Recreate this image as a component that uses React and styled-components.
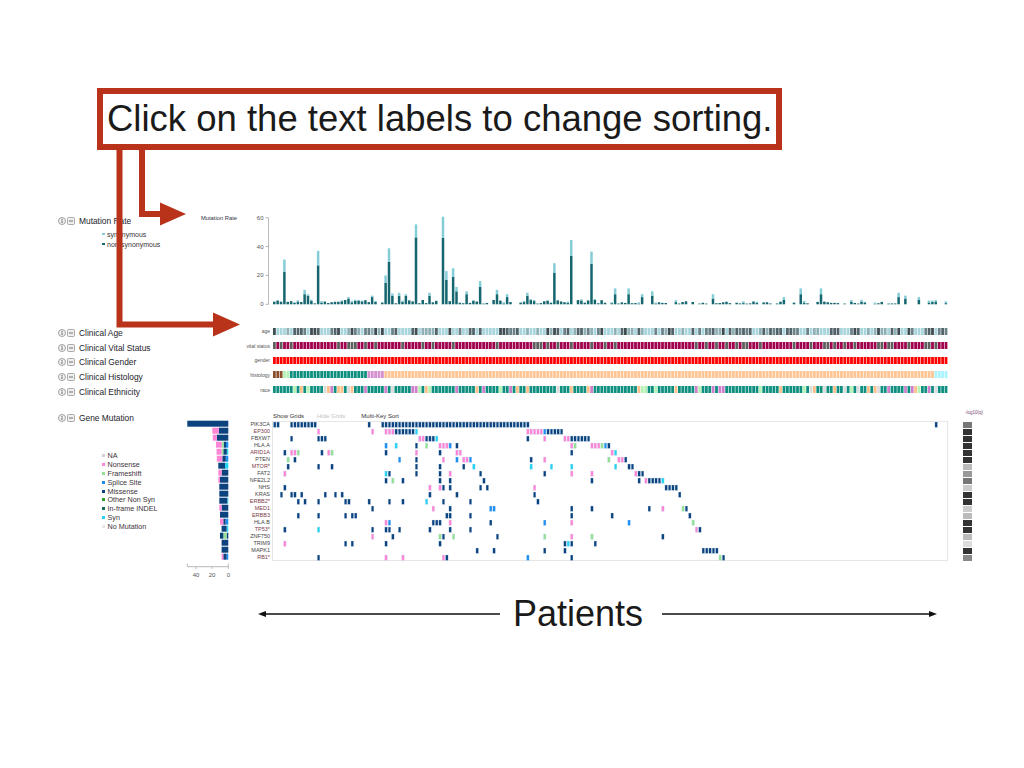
import React from 'react';
import styled, { createGlobalStyle } from 'styled-components';

const RED = '#b9321a';
const N = 200;
const PITCH = 3.375;
const PLOT_W = 676;

const MUT = {
  M: '#0c437f',
  N: '#ff86d6',
  F: '#96e096',
  S: '#1f8ff0',
  Y: '#27d3f2',
};

function mulberry32(a) {
  return function () {
    a |= 0;
    a = (a + 0x6d2b79f5) | 0;
    let t = Math.imul(a ^ (a >>> 15), 1 | a);
    t = (t + Math.imul(t ^ (t >>> 7), 61 | t)) ^ t;
    return ((t ^ (t >>> 14)) >>> 0) / 4294967296;
  };
}

const rng = mulberry32(11);
const pick = (opts) => {
  const r = rng();
  let acc = 0;
  for (const [c, w] of opts) {
    acc += w;
    if (r < acc) return c;
  }
  return opts[opts.length - 1][0];
};

// mutation rate, [non-synonymous, synonymous]
const RATE_PEAKS = {
  3: [22.6, 8.4], 9: [7, 3], 10: [6, 1], 13: [27, 10], 22: [4, 1], 29: [5, 1],
  33: [15, 5], 34: [29.5, 9.3], 35: [6, 1.5], 37: [6, 2], 39: [6, 1], 42: [46.4, 9],
  46: [6, 2], 50: [46, 14.7], 51: [17, 6], 53: [19, 6], 54: [9, 3], 57: [7, 2],
  61: [12, 4], 66: [7, 3], 69: [5, 2], 75: [6, 2], 83: [22, 6.5], 88: [33.5, 11],
  94: [28, 8.5], 101: [7, 4], 105: [7, 4], 109: [5, 2], 112: [6, 3], 130: [4, 3],
  151: [3, 2], 156: [7, 4], 162: [7, 4], 185: [5, 3], 187: [4, 2], 191: [3, 2],
};

const RATES = Array.from({ length: N }, (_, i) => {
  if (RATE_PEAKS[i]) return RATE_PEAKS[i];
  const early = i < 100;
  if (rng() < (early ? 0.08 : 0.25)) return [0, 0];
  const d = early ? 0.5 + rng() * 2.5 : 0.3 + rng() * 1.8;
  const l = rng() < 0.4 ? rng() * 1.4 : 0;
  return [d, l];
});

const AGE = Array.from({ length: N }, () =>
  pick([['#a9d5dd', 0.36], ['#8fb1b6', 0.14], ['#6b8388', 0.15], ['#52636a', 0.2], ['#3f4c51', 0.15]])
);
const VITAL = Array.from({ length: N }, () => pick([['#a0004d', 0.8], ['#5f5f5f', 0.2]]));
const GENDER = Array.from({ length: N }, () => '#ff0000');
const HISTOLOGY = Array.from({ length: N }, (_, i) => {
  if (i < 3) return '#8b4f2c';
  if (i < 5) return '#b6f2b6';
  if (i < 28) return '#0f8f80';
  if (i < 33) return '#d590cf';
  if (i < 196) return '#ffc594';
  return '#aaf3ff';
});
const RACE = Array.from({ length: N }, () =>
  pick([['#0f8f80', 0.75], ['#cf7fcc', 0.08], ['#ffc08a', 0.07], ['#b5f3b5', 0.05], ['#dcdcdc', 0.05]])
);

const CLINICAL = [
  { label: 'Clinical Age', track: 'age', data: AGE },
  { label: 'Clinical Vital Status', track: 'vital status', data: VITAL },
  { label: 'Clinical Gender', track: 'gender', data: GENDER },
  { label: 'Clinical Histology', track: 'histology', data: HISTOLOGY },
  { label: 'Clinical Ethnicity', track: 'race', data: RACE },
];

// name, highlighted, q shade, cells, frequency segments (right to left)
const GENES = [
  ['PIK3CA', 0, '#777', 'M0-1 M5-12 M28 M32-75 M196', 'M41'],
  ['EP300', 1, '#333', 'N13 N29 N33-35 M36-41 Y42 N75-79 S80 M81-85', 'M9.5 N6.5'],
  ['FBXW7', 0, '#333', 'M5 M13-15 N43-44 M45-47 Y48 M75 N80 N86-87 M88-93', 'M11.5 N4'],
  ['HLA.A', 0, '#333', 'S33 Y36 M42 F45 N49-51 S52 M54 N88 F89 N94-96 F97 S98 M99', 'S2.3 M2.3 F2 N5.7'],
  ['ARID1A', 1, '#333', 'M3 N5-6 F7 M14 N16 F17 M33 N42 M49 N54-55 M88 N100 Y101', 'Y1.5 M3.5 F1.7 N5'],
  ['PTEN', 0, '#333', 'F4 M6 S37 M42 N50 S54 N56-57 S58 M76 N80 F99 N102-103 M104', 'S2.5 M3.5 N5.5'],
  ['MTOR*', 1, '#bbb', 'M4 M13 M17 M42 M49 M56 Y59 Y76 Y82 Y88 Y101 M105-106', 'Y3.3 M6.7'],
  ['FAT2', 0, '#999', 'N3 Y33 M34 M42 M49 N52 M61 M80 N88 N94 N107 M108-109', 'M6.7 N3.3'],
  ['NFE2L2', 0, '#777', 'M33 F35 M38 M49 M52 M62 M94 M108 N110 M111-114 Y115', 'M8.3 N1.7'],
  ['NHS', 0, '#ccc', 'M3 N46 N49 M50 M52 M61 M63 N77 M116-119', 'M9'],
  ['KRAS', 0, '#333', 'M2 M5-6 M8 M15 M18 M20 M46 M54 M77 M120', 'M9'],
  ['ERBB2*', 1, '#333', 'M7 M9 M13 M21-22 M28 M34 M38 Y45 M50 M58 M78', 'Y1 M8'],
  ['MED1', 1, '#ccc', 'M29 N47 M52 S64-65 M88 M94 M111 N115 F121 M122', 'M6.7 N2.3'],
  ['ERBB3', 1, '#bbb', 'M7 M13 M21 M23-24 M51-52 M58 M88 M100 M123', 'M8.3'],
  ['HLA.B', 0, '#333', 'N33 S34 M47-49 N52 M64 S80 N88 S105 F124', 'S2.7 M2.3 N3.3'],
  ['TP53*', 1, '#333', 'M3 Y13 M29 M33-34 M37 M46 M52 M58 N125 M126', 'Y1.7 M5'],
  ['ZNF750', 0, '#bbb', 'N29 M35 F49 M50 F53 M66 F80 N88 F94 M115', 'M1.7 F3.3 M3.3'],
  ['TRIM9', 0, '#ddd', 'N3 M21 M23 M33 M49 M86 Y87 M88 M95', 'M6.7'],
  ['MAPK1', 0, '#333', 'M60 M65 M80 M86 M127-131', 'M6.7'],
  ['RB1*', 1, '#888', 'M13 N33 N38 N50 M51 S75 M88 F132 M133', 'S1.7 M3.3 N1.7'],
].map(([name, hi, q, cells, freq]) => ({
  name,
  hi: !!hi,
  q,
  cells: cells.split(' ').flatMap((tok) => {
    const [a, b] = tok.slice(1).split('-').map(Number);
    const out = [];
    for (let i = a; i <= (b ?? a); i++) out.push([i, tok[0]]);
    return out;
  }),
  freq: freq.split(' ').map((tok) => [tok[0], Number(tok.slice(1))]),
}));

const MUT_LEGEND = [
  ['NA', '#d3d3d3'],
  ['Nonsense', MUT.N],
  ['Frameshift', MUT.F],
  ['Splice Site', MUT.S],
  ['Missense', MUT.M],
  ['Other Non Syn', '#2ca02c'],
  ['In-frame INDEL', '#1b6b5a'],
  ['Syn', MUT.Y],
  ['No Mutation', '#fafafa'],
];

const GlobalStyle = createGlobalStyle`
  html, body {
    margin: 0;
    padding: 0;
    background: #fff;
  }
  body {
    font-family: "Liberation Sans", Arial, sans-serif;
  }
`;

const Slide = styled.div`
  position: relative;
  width: 1024px;
  height: 768px;
  overflow: hidden;
  padding-top: 88px;
  box-sizing: border-box;
  background: #fff;
`;

const Callout = styled.div`
  box-sizing: border-box;
  width: 685px;
  height: 62px;
  margin-left: 97px;
  padding-left: 4px;
  border: 6px solid ${RED};
  display: flex;
  align-items: center;
  font-size: 36.5px;
  color: #1a1a1a;
  white-space: nowrap;
`;

const Pointers = styled.svg`
  position: absolute;
  left: 0;
  top: 0;
  pointer-events: none;
`;

const Dashboard = styled.div`
  margin-top: 60px;
  padding-left: 57px;
  color: #1e1e2e;
`;

const Section = styled.div`
  display: flex;
  align-items: flex-start;
  margin-top: ${(p) => p.$gap || 0}px;
`;

const LeftPanel = styled.div`
  flex: none;
  width: 183px;
  display: flex;
  justify-content: space-between;
  align-items: flex-start;
`;

const TrackHeader = styled.div`
  display: flex;
  align-items: center;
  height: 10px;
  margin-top: ${(p) => p.$top || 0}px;
  font-size: 8.4px;
  white-space: nowrap;
  color: #1c1c2a;
`;

const IconGroup = styled.span`
  display: flex;
  gap: 1.5px;
  margin: 0 4px 0 0.5px;

  svg {
    display: block;
  }
`;

const Legend = styled.ul`
  list-style: none;
  margin: ${(p) => p.$top}px 0 0;
  padding: 0 0 0 ${(p) => p.$indent}px;
`;

const LegendItem = styled.li`
  display: flex;
  align-items: center;
  height: ${(p) => p.$h}px;
  font-size: ${(p) => p.$size}px;
  color: #3b3338;
  white-space: nowrap;
`;

const Swatch = styled.span`
  flex: none;
  box-sizing: border-box;
  width: ${(p) => p.$s}px;
  height: ${(p) => p.$s}px;
  margin-right: ${(p) => p.$gap}px;
  background: ${(p) => p.$color};
  border: ${(p) => (p.$outline ? '0.5px solid #e2e2e2' : 'none')};
`;

const TrackTitle = styled.div`
  margin-top: 5px;
  padding-right: 3px;
  font-size: 5.8px;
  line-height: 6px;
  color: #334;
  white-space: nowrap;
`;

const Chart = styled.svg`
  display: block;
  flex: none;
  font-family: "Liberation Sans", Arial, sans-serif;
`;

const ClinicalList = styled.div`
  margin-top: 13.7px;
`;

const ClinicalRow = styled.div`
  display: flex;
  align-items: center;
  height: 14.67px;
`;

const RowLabel = styled.div`
  flex: none;
  width: 183px;
  padding-top: 4px;
`;

const TrackName = styled.div`
  flex: none;
  width: 30px;
  text-align: right;
  font-size: 5px;
  color: #555;
  white-space: nowrap;
`;

const Strip = styled.svg`
  display: block;
  flex: none;
  margin-left: 2px;
`;

const GeneNames = styled.ul`
  flex: none;
  width: 30px;
  margin: 0;
  padding: 12.7px 0 0;
  list-style: none;
`;

const GeneName = styled.li`
  height: 7px;
  line-height: 7px;
  text-align: right;
  font-size: 5.5px;
  color: ${(p) => (p.$hi ? '#7c3a48' : '#444')};
  white-space: nowrap;
`;

const OncoColumn = styled.div`
  flex: none;
  width: ${PLOT_W}px;
  margin-left: 2px;
`;

const Toolbar = styled.div`
  display: flex;
  align-items: center;
  gap: 13px;
  height: 12.7px;
  padding: 2.7px 0 0 1px;
  box-sizing: border-box;
  font-size: 6px;
  line-height: 10px;
`;

const ToolButton = styled.span`
  color: ${(p) => (p.$muted ? '#c4c4c4' : '#333')};
  margin-left: ${(p) => p.$shift || 0}px;
  white-space: nowrap;
  cursor: pointer;
`;

const QColumn = styled.div`
  flex: none;
  width: 9px;
  margin-left: 15px;
`;

const QLabel = styled.div`
  height: 13.7px;
  padding: 2.5px 0 0 2px;
  box-sizing: border-box;
  font-size: 4.5px;
  line-height: 5px;
  color: #7b4a7b;
  white-space: nowrap;
`;

const QCell = styled.div`
  height: 6px;
  margin-bottom: 1px;
  background: ${(p) => p.$shade};
`;

const PatientsRow = styled.div`
  display: flex;
  align-items: center;
  height: 40px;
  margin: 9px 0 0 201px;
`;

const PatientsLabel = styled.span`
  margin: 0 19px 0 13px;
  font-size: 36px;
  line-height: 1;
  color: #1a1a1a;
`;

const InfoIcon = () => (
  <svg width="8" height="8" viewBox="0 0 8 8">
    <circle cx="4" cy="4" r="3.5" fill="#f3f3f3" stroke="#8c8c8c" strokeWidth="0.8" />
    <rect x="3.55" y="3.4" width="0.9" height="2.6" fill="#555" />
    <circle cx="4" cy="2.35" r="0.55" fill="#555" />
  </svg>
);

const CollapseIcon = () => (
  <svg width="8" height="8" viewBox="0 0 8 8">
    <rect x="0.5" y="0.5" width="7" height="7" rx="1" fill="#eee" stroke="#999" strokeWidth="0.8" />
    <rect x="2" y="3.6" width="4" height="0.8" fill="#555" />
  </svg>
);

const Header = ({ children, top }) => (
  <TrackHeader $top={top}>
    <IconGroup>
      <InfoIcon />
      <CollapseIcon />
    </IconGroup>
    {children}
  </TrackHeader>
);

const RateChart = () => {
  const y0 = 94.3;
  const k = 1.443;
  return (
    <Chart width="710" height="100">
      <line x1="28.5" y1="7.7" x2="28.5" y2={y0} stroke="#aaa" strokeWidth="0.8" />
      {[0, 20, 40, 60].map((v) => (
        <g key={v}>
          <line x1="25.5" y1={y0 - v * k} x2="28.5" y2={y0 - v * k} stroke="#999" strokeWidth="0.7" />
          <text x="23.5" y={y0 - v * k + 2} fontSize="6" fill="#555" textAnchor="end">
            {v}
          </text>
        </g>
      ))}
      {RATES.map(([d, l], i) => {
        const x = 33 + i * PITCH;
        return (
          <g key={i}>
            <rect x={x} y={y0 - d * k} width="2.5" height={d * k} fill="#16666f" />
            <rect x={x} y={y0 - (d + l) * k} width="2.5" height={l * k} fill="#84cdd6" />
          </g>
        );
      })}
    </Chart>
  );
};

const ClinicalStrip = ({ data }) => (
  <Strip width={PLOT_W} height="7">
    {data.map((c, i) => (
      <rect key={i} x={1 + i * PITCH} y="0" width={PITCH - 0.6} height="7" fill={c} />
    ))}
  </Strip>
);

const FreqChart = () => (
  <Chart width="55" height="177">
    {GENES.map((g, r) => {
      let right = 43.3;
      return (
        <g key={g.name}>
          {g.freq.map(([t, len], j) => {
            right -= len;
            return <rect key={j} x={right} y={12.7 + r * 7} width={len} height="6" fill={MUT[t]} />;
          })}
        </g>
      );
    })}
    <path d="M2.3 155.7 V158.7 H43.3 V155.7" stroke="#999" strokeWidth="0.7" fill="none" />
    {[[11, '40'], [27, '20'], [43.3, '0']].map(([x, v]) => (
      <g key={v}>
        <line x1={x} y1="158.7" x2={x} y2="161" stroke="#999" strokeWidth="0.6" />
        <text x={x} y="168.5" fontSize="6" fill="#555" textAnchor="middle">
          {v}
        </text>
      </g>
    ))}
  </Chart>
);

const OncoGrid = () => (
  <Chart width={PLOT_W} height="140">
    <rect x="0.5" y="0.5" width={PLOT_W - 1} height="139" fill="#fff" stroke="#e6e6e6" />
    {GENES.map((g, r) =>
      g.cells.map(([i, t]) => (
        <rect
          key={`${r}-${i}`}
          x={1.4 + i * PITCH}
          y={1 + r * 7}
          width="2.6"
          height="5.4"
          fill={MUT[t]}
          stroke="#cfe3f5"
          strokeWidth="0.3"
        />
      ))
    )}
  </Chart>
);

const LongArrow = ({ width, left }) => (
  <svg width={width} height="10" viewBox={`0 0 ${width} 10`}>
    <line x1={left ? 5 : 0} y1="5" x2={left ? width : width - 5} y2="5" stroke="#111" strokeWidth="1.6" />
    <polygon
      points={left ? '0,5 8,2 8,8' : `${width},5 ${width - 8},2 ${width - 8},8`}
      fill="#111"
    />
  </svg>
);

const App = () => (
  <Slide>
    <GlobalStyle />
    <Callout>Click on the text labels to change sorting.</Callout>

    <Dashboard>
      <Section>
        <LeftPanel>
          <div>
            <Header top={6}>Mutation Rate</Header>
            <Legend $top={3} $indent={45}>
              <LegendItem $h={10} $size={7}>
                <Swatch $s={2.5} $gap={2.5} $color="#84cdd6" />
                synonymous
              </LegendItem>
              <LegendItem $h={10} $size={7}>
                <Swatch $s={2.5} $gap={2.5} $color="#16666f" />
                non-synonymous
              </LegendItem>
            </Legend>
          </div>
          <TrackTitle>Mutation Rate</TrackTitle>
        </LeftPanel>
        <RateChart />
      </Section>

      <ClinicalList>
        {CLINICAL.map((c) => (
          <ClinicalRow key={c.track}>
            <RowLabel>
              <Header>{c.label}</Header>
            </RowLabel>
            <TrackName>{c.track}</TrackName>
            <ClinicalStrip data={c.data} />
          </ClinicalRow>
        ))}
      </ClinicalList>

      <Section $gap={11}>
        <LeftPanel>
          <div>
            <Header top={5}>Gene Mutation</Header>
            <Legend $top={28.6} $indent={44.5}>
              {MUT_LEGEND.map(([label, color]) => (
                <LegendItem key={label} $h={8.8} $size={7.2}>
                  <Swatch $s={3} $gap={3} $color={color} $outline={label === 'No Mutation'} />
                  {label}
                </LegendItem>
              ))}
            </Legend>
          </div>
          <FreqChart />
        </LeftPanel>
        <GeneNames>
          {GENES.map((g) => (
            <GeneName key={g.name} $hi={g.hi}>
              {g.name}
            </GeneName>
          ))}
        </GeneNames>
        <OncoColumn>
          <Toolbar>
            <ToolButton>Show Grids</ToolButton>
            <ToolButton $muted>Hide Grids</ToolButton>
            <ToolButton $shift={3}>Multi-Key Sort</ToolButton>
          </Toolbar>
          <OncoGrid />
        </OncoColumn>
        <QColumn>
          <QLabel>-log10(q)</QLabel>
          {GENES.map((g) => (
            <QCell key={g.name} $shade={g.q} />
          ))}
        </QColumn>
      </Section>

      <PatientsRow>
        <LongArrow width={242} left />
        <PatientsLabel>Patients</PatientsLabel>
        <LongArrow width={275} />
      </PatientsRow>
    </Dashboard>

    <Pointers width="1024" height="768">
      <path d="M142 149 V214 H163" stroke={RED} strokeWidth="6" fill="none" />
      <polygon points="160,202.5 186,214 160,225.5" fill={RED} />
      <path d="M119.5 149 V324.5 H216" stroke={RED} strokeWidth="6" fill="none" />
      <polygon points="213,312.5 240,324.5 213,336.5" fill={RED} />
    </Pointers>
  </Slide>
);

export default App;
